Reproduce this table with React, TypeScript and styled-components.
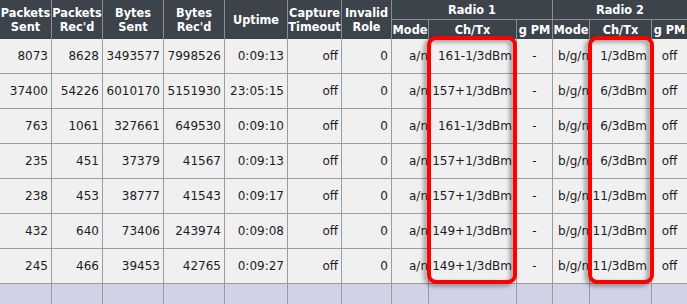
import React from "react";
import styled, { createGlobalStyle } from "styled-components";

const GlobalStyle = createGlobalStyle`
  * { box-sizing: border-box; }
  body {
    margin: 0;
    background: #f0f0f0;
    font-family: "DejaVu Sans", Verdana, sans-serif;
  }
`;

const COLS = [52, 51, 61, 61, 63, 54, 50, 37, 88, 36, 37, 62, 35];

const Page = styled.div`
  position: relative;
  width: 687px;
  height: 304px;
  overflow: hidden;
`;

const Grid = styled.div`
  display: grid;
  grid-template-columns: ${COLS.map((c) => `${c}px`).join(" ")};
  grid-template-rows: 20px 19px repeat(7, 35px) 35px;
`;

const HeadCell = styled.div<{ $rows?: number; $cols?: number; $line?: boolean; $last?: boolean }>`
  grid-row: span ${({ $rows }) => $rows || 1};
  grid-column: span ${({ $cols }) => $cols || 1};
  display: flex;
  align-items: center;
  justify-content: center;
  text-align: center;
  background: #3c434a;
  color: #ffffff;
  font-family: "DejaVu Sans Condensed", "Liberation Sans", sans-serif;
  font-weight: bold;
  font-size: 12.6px;
  line-height: 14px;
  white-space: nowrap;
  border-right: ${({ $last }) => ($last ? "none" : "1px solid #878d93")};
  border-bottom: ${({ $line }) => ($line ? "1px solid #878d93" : "none")};
`;

const Cell = styled.div<{ $align?: string; $pad?: number; $last?: boolean }>`
  display: flex;
  align-items: center;
  justify-content: ${({ $align }) =>
    $align === "center" ? "center" : "flex-end"};
  padding-right: ${({ $pad }) => ($pad === undefined ? 3 : $pad)}px;
  background: #f0f0f0;
  color: #1c1c24;
  font-size: 12px;
  white-space: nowrap;
  border-right: ${({ $last }) => ($last ? "none" : "1px solid #9c9c9c")};
  border-bottom: 1px solid #9c9c9c;
`;

const FillerCell = styled.div<{ $last?: boolean }>`
  background: #d2d2e6;
  border-right: ${({ $last }) => ($last ? "none" : "1px solid #9c9c9c")};
`;

const Highlight = styled.div<{ $left: number; $width: number }>`
  position: absolute;
  top: 36px;
  left: ${({ $left }) => $left}px;
  width: ${({ $width }) => $width}px;
  height: 248px;
  border: 4px solid #ff0000;
  border-radius: 9px;
  filter: drop-shadow(-3px 2px 2px rgba(0, 0, 0, 0.4));
  pointer-events: none;
`;

type Row = string[];

const rows: Row[] = [
  ["8073", "8628", "3493577", "7998526", "0:09:13", "off", "0", "a/n", "161-1/3dBm", "-", "b/g/n", "1/3dBm", "off"],
  ["37400", "54226", "6010170", "5151930", "23:05:15", "off", "0", "a/n", "157+1/3dBm", "-", "b/g/n", "6/3dBm", "off"],
  ["763", "1061", "327661", "649530", "0:09:10", "off", "0", "a/n", "161-1/3dBm", "-", "b/g/n", "6/3dBm", "off"],
  ["235", "451", "37379", "41567", "0:09:13", "off", "0", "a/n", "157+1/3dBm", "-", "b/g/n", "6/3dBm", "off"],
  ["238", "453", "38777", "41543", "0:09:17", "off", "0", "a/n", "157+1/3dBm", "-", "b/g/n", "11/3dBm", "off"],
  ["432", "640", "73406", "243974", "0:09:08", "off", "0", "a/n", "149+1/3dBm", "-", "b/g/n", "11/3dBm", "off"],
  ["245", "466", "39453", "42765", "0:09:27", "off", "0", "a/n", "149+1/3dBm", "-", "b/g/n", "11/3dBm", "off"],
];

// per column: alignment and right padding
const colFormat: { align?: string; pad?: number }[] = [
  {}, {}, {}, {}, {}, {}, {},
  { pad: 0 },
  { pad: 4 },
  { align: "center", pad: 0 },
  { pad: 0 },
  { pad: 4 },
  { align: "center", pad: 0 },
];

const App: React.FC = () => {
  return (
    <Page>
      <GlobalStyle />
      <Grid>
        <HeadCell $rows={2}>Packets<br />Sent</HeadCell>
        <HeadCell $rows={2}>Packets<br />Rec'd</HeadCell>
        <HeadCell $rows={2}>Bytes<br />Sent</HeadCell>
        <HeadCell $rows={2}>Bytes<br />Rec'd</HeadCell>
        <HeadCell $rows={2}>Uptime</HeadCell>
        <HeadCell $rows={2}>Capture<br />Timeout</HeadCell>
        <HeadCell $rows={2}>Invalid<br />Role</HeadCell>
        <HeadCell $cols={3} $line>Radio 1</HeadCell>
        <HeadCell $cols={3} $line $last>Radio 2</HeadCell>
        <HeadCell>Mode</HeadCell>
        <HeadCell>Ch/Tx</HeadCell>
        <HeadCell>g PM</HeadCell>
        <HeadCell>Mode</HeadCell>
        <HeadCell>Ch/Tx</HeadCell>
        <HeadCell $last>g PM</HeadCell>

        {rows.map((row, r) =>
          row.map((value, c) => (
            <Cell
              key={`${r}-${c}`}
              $align={colFormat[c].align}
              $pad={colFormat[c].pad}
              $last={c === row.length - 1}
            >
              {value}
            </Cell>
          ))
        )}
        {COLS.map((_, c) => (
          <FillerCell key={`f-${c}`} $last={c === COLS.length - 1} />
        ))}
      </Grid>
      <Highlight $left={427} $width={90} />
      <Highlight $left={588} $width={66} />
    </Page>
  );
};

export default App;
